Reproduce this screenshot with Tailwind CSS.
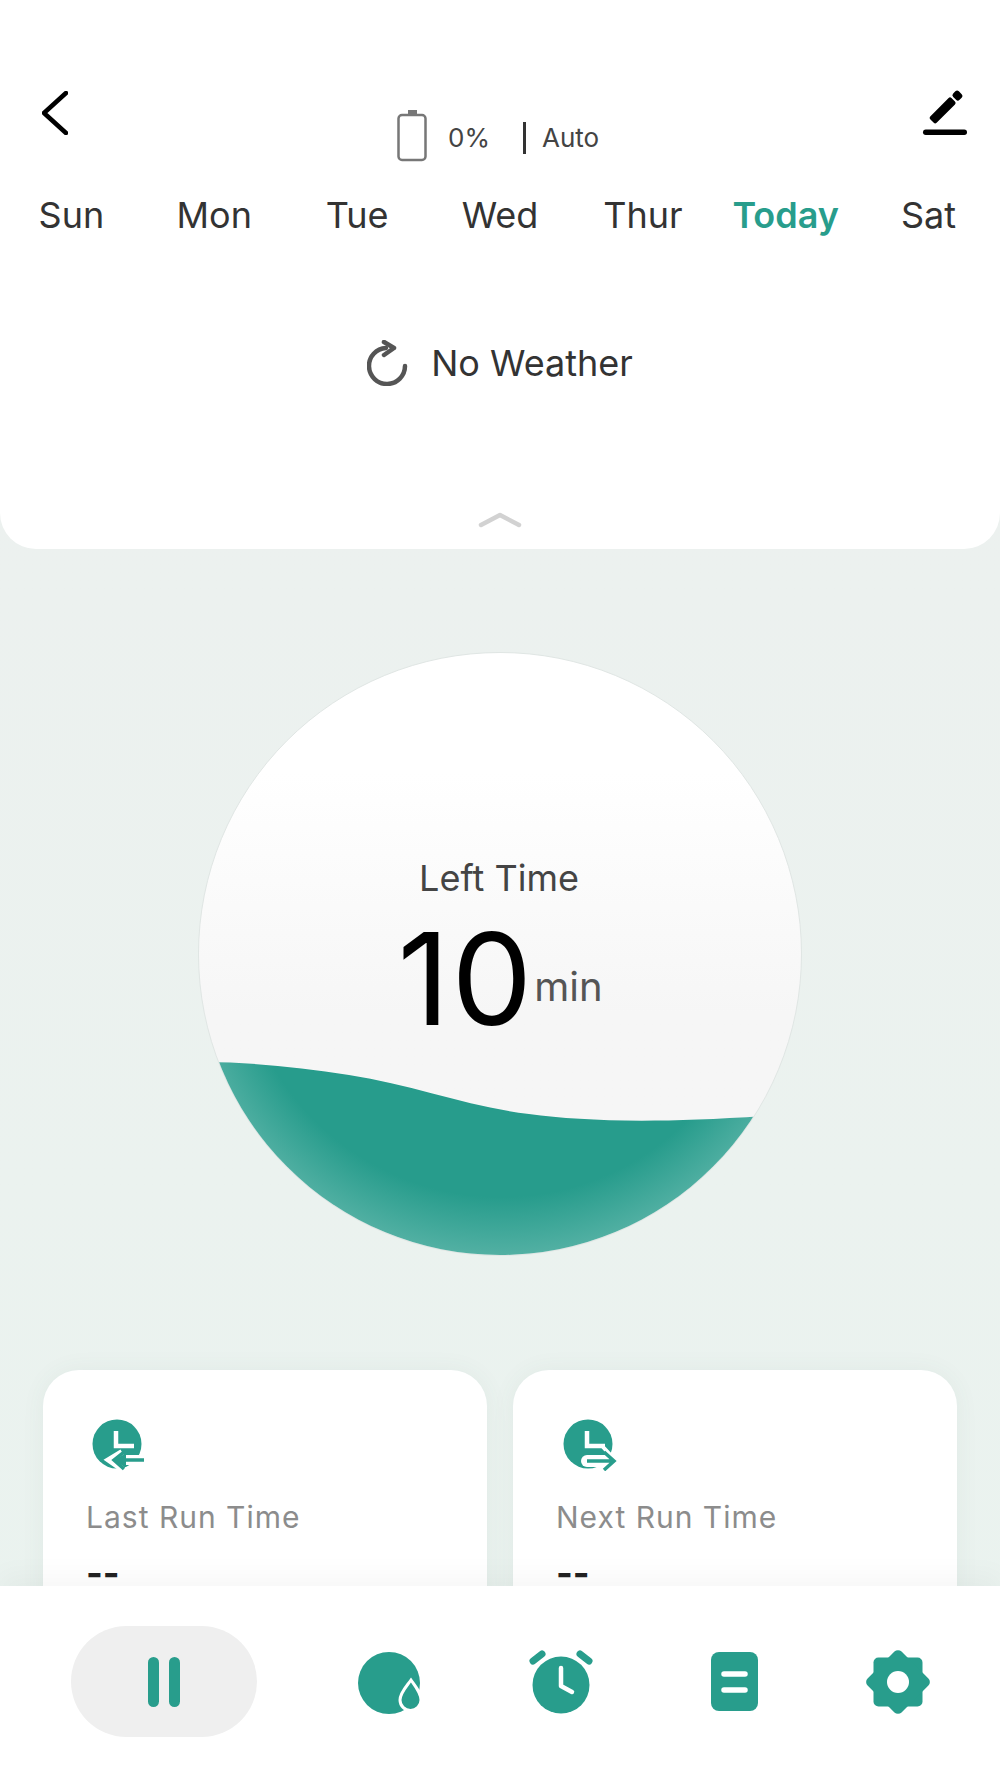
<!DOCTYPE html>
<html lang="en">
<head>
    <meta charset="UTF-8">
    <meta name="viewport" content="width=device-width, initial-scale=1.0">
    <title>Sprinkler Timer</title>
    <script src="https://cdn.jsdelivr.net/npm/@tailwindcss/browser@4"></script>
</head>
<body class="font-[Inter,sans-serif]">
    <div class="flex flex-col h-[1778px] w-[1000px] overflow-hidden bg-gradient-to-b from-[#edf0ef] to-[#eaf3ef]">

        <!-- Top panel -->
        <section class="relative z-10 flex flex-col h-[549px] shrink-0 pt-[88px] bg-white rounded-b-[36px]">
            <div class="flex items-start h-[105px] pl-[42px] pr-[33px]">
                <svg class="mt-[3px]" width="26" height="44" viewBox="0 0 26 44" fill="none" stroke="#000" stroke-width="4.5" stroke-linecap="round" stroke-linejoin="round">
                    <path d="M24 2 L2 22 L24 42"/>
                </svg>
                <div class="flex items-center ml-[329px] mt-[22px] text-[26px] text-[#444]">
                    <svg width="30" height="52" viewBox="0 0 30 52" fill="none">
                        <rect x="1.5" y="5" width="27" height="45" rx="3.5" stroke="#777" stroke-width="2.5"/>
                        <rect x="11" y="0" width="9" height="5" fill="#777"/>
                    </svg>
                    <span class="ml-[21px] mt-[3px]">0%</span>
                    <span class="ml-[33px] mt-[3px] w-[3px] h-[32px] bg-[#333]"></span>
                    <span class="ml-[16px] mt-[3px]">Auto</span>
                </div>
                <svg class="ml-auto" width="46" height="48" viewBox="0 0 46 48" fill="#000">
                    <g transform="translate(11 33) rotate(-45)">
                        <rect x="0" y="-4.5" width="30" height="9" rx="2"/>
                        <rect x="32" y="-4.5" width="8" height="9" rx="2.5"/>
                    </g>
                    <rect x="2" y="41.5" width="44" height="5.5" rx="2.75"/>
                </svg>
            </div>

            <div class="grid grid-cols-7 text-center text-[36px] leading-[44px] text-[#333]">
                <span>Sun</span>
                <span>Mon</span>
                <span>Tue</span>
                <span>Wed</span>
                <span>Thur</span>
                <span class="font-semibold text-[#289d8c]">Today</span>
                <span>Sat</span>
            </div>

            <div class="flex items-center justify-center mt-[103px] text-[36px] leading-[44px] text-[#333]">
                <svg width="42" height="46" viewBox="0 0 42 46" fill="none" stroke="#555" stroke-width="4.5" stroke-linecap="round" stroke-linejoin="round">
                    <path d="M19 8 A18 18 0 1 0 38 26"/>
                    <path d="M17 2 L27 8 L17 15"/>
                </svg>
                <span class="ml-[22px]">No Weather</span>
            </div>

            <svg class="mt-auto mb-[21px] self-center" width="44" height="16" viewBox="0 0 44 16" fill="none" stroke="#d2d2d2" stroke-width="4.5" stroke-linecap="round" stroke-linejoin="round">
                <path d="M3 13 L22 3 L41 13"/>
            </svg>
        </section>

        <main class="flex-1 min-h-0 overflow-hidden">
            <!-- Left time dial -->
            <div class="relative flex flex-col items-center w-[604px] h-[604px] mx-auto mt-[103px] pt-[203px] rounded-full overflow-hidden border border-[#e0e6e4] bg-gradient-to-b from-white from-20% to-[#f6f6f6] to-60%">
                <span class="mr-[2px] text-[36px] leading-[44px] text-[#444]">Left Time</span>
                <div class="flex items-center mt-[12px]">
                    <span class="text-[128px] leading-[134px] font-normal tracking-[2px] text-black">10</span>
                    <span class="mt-[16px] text-[40px] leading-[48px] text-[#555]">min</span>
                </div>
                <svg class="absolute left-0 top-0" width="604" height="604" viewBox="0 0 604 604">
                    <defs>
                        <radialGradient id="water" gradientUnits="userSpaceOnUse" cx="302" cy="280" r="322">
                            <stop offset="0.82" stop-color="#279c8c"/>
                            <stop offset="1" stop-color="#52b0a3"/>
                        </radialGradient>
                    </defs>
                    <path fill="url(#water)" d="M0 409 C50 409 100 414 150 422 C215 432 270 454 330 461 C390 469 470 471 604 460 V604 H0 Z"/>
                </svg>
            </div>

            <!-- Run time cards -->
            <div class="grid grid-cols-2 gap-[26px] px-[43px] mt-[114px]">
                <div class="h-[260px] pt-[49px] pl-[43px] rounded-[36px] bg-white shadow-[0_0_24px_rgba(60,100,90,0.06)]">
                    <svg class="ml-[6px]" width="52" height="52" viewBox="0 0 52 52" fill="none">
                        <circle cx="25" cy="25" r="24.5" fill="#289d8c"/>
                        <path d="M24 12 V27 H42" stroke="#fff" stroke-width="4.5"/>
                        <path d="M30 33 L17 41 L30 50" stroke="#fff" stroke-width="6"/>
                        <path d="M34 36 H52 V46 H34 Z" fill="#fff"/>
                        <path d="M52 41 H22 M32 33 L22 41 L32 50" stroke="#289d8c" stroke-width="3.5"/>
                    </svg>
                    <div class="mt-[28px] text-[30px] leading-[36px] tracking-[1px] text-[#8c8c8c]">Last Run Time</div>
                    <div class="mt-[28px] text-[36px] leading-[20px] font-bold text-[#222]">--</div>
                </div>
                <div class="h-[260px] pt-[49px] pl-[43px] rounded-[36px] bg-white shadow-[0_0_24px_rgba(60,100,90,0.06)]">
                    <svg class="ml-[7px]" width="56" height="52" viewBox="0 0 56 52" fill="none">
                        <circle cx="25" cy="25" r="24.5" fill="#289d8c"/>
                        <path d="M24 12 V27 H42" stroke="#fff" stroke-width="4.5"/>
                        <path d="M24 42 H44" stroke="#fff" stroke-width="12" stroke-linecap="round"/>
                        <path d="M40 28 L53 42 L40 52" stroke="#fff" stroke-width="4"/>
                        <path d="M24 42 H50 M41 33 L51 42 L41 51" stroke="#289d8c" stroke-width="3.5"/>
                    </svg>
                    <div class="mt-[28px] text-[30px] leading-[36px] tracking-[1px] text-[#8c8c8c]">Next Run Time</div>
                    <div class="mt-[28px] text-[36px] leading-[20px] font-bold text-[#222]">--</div>
                </div>
            </div>
        </main>

        <!-- Bottom bar -->
        <nav class="relative z-10 flex items-start h-[192px] shrink-0 pl-[71px] pt-[40px] bg-white shadow-[0_-12px_24px_rgba(0,0,0,0.03)]">
            <div class="flex items-center justify-center gap-[10px] w-[186px] h-[111px] rounded-full bg-[#efefef]">
                <span class="w-[11px] h-[50px] rounded-full bg-[#289d8c]"></span>
                <span class="w-[11px] h-[50px] rounded-full bg-[#289d8c]"></span>
            </div>
            <svg class="ml-[101px] mt-[26px]" width="64" height="64" viewBox="0 0 64 64">
                <circle cx="31" cy="31" r="31" fill="#289d8c"/>
                <path d="M53 28 C58 35 63 41 63 48 A10.5 10.5 0 0 1 42 48 C42 41 48 35 53 28 Z" fill="#289d8c" stroke="#fff" stroke-width="3"/>
            </svg>
            <svg class="ml-[107px] mt-[24px]" width="64" height="64" viewBox="0 0 64 64" fill="none">
                <circle cx="32" cy="35" r="28.5" fill="#289d8c"/>
                <path d="M4 11 L13 4 M60 11 L51 4" stroke="#289d8c" stroke-width="7" stroke-linecap="round"/>
                <path d="M32 18 V36 L43 42" stroke="#fff" stroke-width="4.5" stroke-linecap="round" stroke-linejoin="round"/>
            </svg>
            <svg class="ml-[118px] mt-[26px]" width="47" height="59" viewBox="0 0 47 59" fill="none">
                <rect width="47" height="59" rx="8" fill="#289d8c"/>
                <path d="M13 22 H34 M13 38 H34" stroke="#fff" stroke-width="5.5" stroke-linecap="round"/>
            </svg>
            <svg class="ml-[108px] mt-[24px]" width="64" height="64" viewBox="0 0 64 64">
                <rect x="7.5" y="7.5" width="49" height="49" rx="5" fill="#289d8c"/>
                <rect x="8" y="8" width="48" height="48" rx="5" fill="#289d8c" transform="rotate(45 32 32)"/>
                <circle cx="32" cy="32" r="11" fill="#fff"/>
            </svg>
        </nav>
    </div>
</body>
</html>
